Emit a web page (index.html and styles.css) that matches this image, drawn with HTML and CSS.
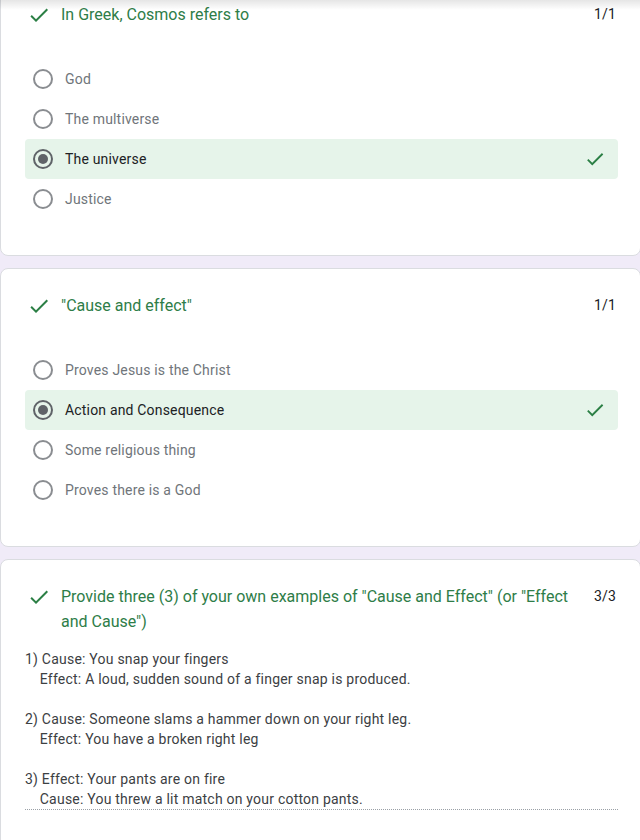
FILE: index.html
```html
<!DOCTYPE html>
<html>
<head>
<meta charset="utf-8">
<link rel="stylesheet" href="styles.css">
</head>
<body>
<div class="topshade"></div>
<main class="list">
  <section class="card">
    <div class="qhead">
      <svg class="check" viewBox="0 0 24 24"><path d="M9 16.17L4.83 12l-1.42 1.41L9 19 21 7l-1.41-1.41z"/></svg>
      <div class="qtitle">In Greek, Cosmos refers to</div>
      <div class="score">1/1</div>
    </div>
    <div class="options">
      <div class="opt"><span class="radio"></span><span class="otext">God</span></div>
      <div class="opt"><span class="radio"></span><span class="otext">The multiverse</span></div>
      <div class="opt sel"><span class="radio on"></span><span class="otext">The universe</span>
        <svg class="check right" viewBox="0 0 24 24"><path d="M9 16.17L4.83 12l-1.42 1.41L9 19 21 7l-1.41-1.41z"/></svg></div>
      <div class="opt"><span class="radio"></span><span class="otext">Justice</span></div>
    </div>
  </section>

  <section class="card">
    <div class="qhead">
      <svg class="check" viewBox="0 0 24 24"><path d="M9 16.17L4.83 12l-1.42 1.41L9 19 21 7l-1.41-1.41z"/></svg>
      <div class="qtitle">"Cause and effect"</div>
      <div class="score">1/1</div>
    </div>
    <div class="options">
      <div class="opt"><span class="radio"></span><span class="otext">Proves Jesus is the Christ</span></div>
      <div class="opt sel"><span class="radio on"></span><span class="otext">Action and Consequence</span>
        <svg class="check right" viewBox="0 0 24 24"><path d="M9 16.17L4.83 12l-1.42 1.41L9 19 21 7l-1.41-1.41z"/></svg></div>
      <div class="opt"><span class="radio"></span><span class="otext">Some religious thing</span></div>
      <div class="opt"><span class="radio"></span><span class="otext">Proves there is a God</span></div>
    </div>
  </section>

  <section class="card last">
    <div class="qhead">
      <svg class="check" viewBox="0 0 24 24"><path d="M9 16.17L4.83 12l-1.42 1.41L9 19 21 7l-1.41-1.41z"/></svg>
      <div class="qtitle">Provide three (3) of your own examples of "Cause and Effect" (or "Effect and Cause")</div>
      <div class="score">3/3</div>
    </div>
    <div class="answer">1) Cause: You snap your fingers
    Effect: A loud, sudden sound of a finger snap is produced.

2) Cause: Someone slams a hammer down on your right leg.
    Effect: You have a broken right leg

3) Effect: Your pants are on fire
    Cause: You threw a lit match on your cotton pants.</div>
  </section>
</main>
</body>
</html>
```

FILE: styles.css
```css
html, body {
  margin: 0;
  padding: 0;
  background: #f0ebf8;
  overflow: hidden;
}
body {
  font-family: Roboto, "Liberation Sans", sans-serif;
  width: 640px;
  height: 840px;
  position: relative;
}
.topshade {
  position: absolute;
  left: 0;
  top: 0;
  width: 640px;
  height: 10px;
  background: linear-gradient(to bottom, rgba(0,0,0,0.10), rgba(0,0,0,0));
  z-index: 5;
}
.list {
  display: flex;
  flex-direction: column;
  gap: 12px;
  margin-top: -23px;
}
.card {
  background: #fff;
  border: 1px solid #dadce0;
  border-radius: 8px;
  padding: 24px 22px 36px 24px;
  width: 641px;
  box-sizing: border-box;
}
.qhead {
  display: flex;
  align-items: flex-start;
}
.check {
  width: 24px;
  height: 24px;
  fill: #2b7f45;
  flex: none;
}
.qhead .check {
  margin-left: 2px;
  margin-top: 1px;
}
.qtitle {
  flex: 1;
  margin-left: 10px;
  font-size: 16px;
  line-height: 25px;
  color: #2e7d48;
}
.score {
  font-size: 14px;
  line-height: 25px;
  color: #202124;
  margin-left: 12px;
  margin-right: 2px;
  letter-spacing: 0.2px;
}
.options {
  margin-top: 32px;
  display: flex;
  flex-direction: column;
}
.opt {
  height: 40px;
  display: flex;
  align-items: center;
  padding: 0 12px 0 8px;
  border-radius: 4px;
}
.opt.sel {
  background: #e6f4ea;
}
.radio {
  width: 20px;
  height: 20px;
  box-sizing: border-box;
  border: 2px solid #8a8d91;
  border-radius: 50%;
  flex: none;
  display: flex;
  align-items: center;
  justify-content: center;
}
.radio.on {
  border-color: #5f6368;
}
.radio.on::after {
  content: "";
  width: 10px;
  height: 10px;
  border-radius: 50%;
  background: #5f6368;
}
.otext {
  margin-left: 12px;
  font-size: 14px;
  color: #70757a;
  flex: 1;
  letter-spacing: 0.18px;
}
.sel .otext {
  color: #202124;
}
.check.right {
  width: 22px;
  height: 22px;
}
.answer {
  margin-top: 15px;
  white-space: pre;
  font-size: 14px;
  line-height: 20px;
  color: #3c4043;
  letter-spacing: 0.22px;
  border-bottom: 1px dotted #9aa0a6;
}
.card.last {
  padding-bottom: 60px;
}
```
